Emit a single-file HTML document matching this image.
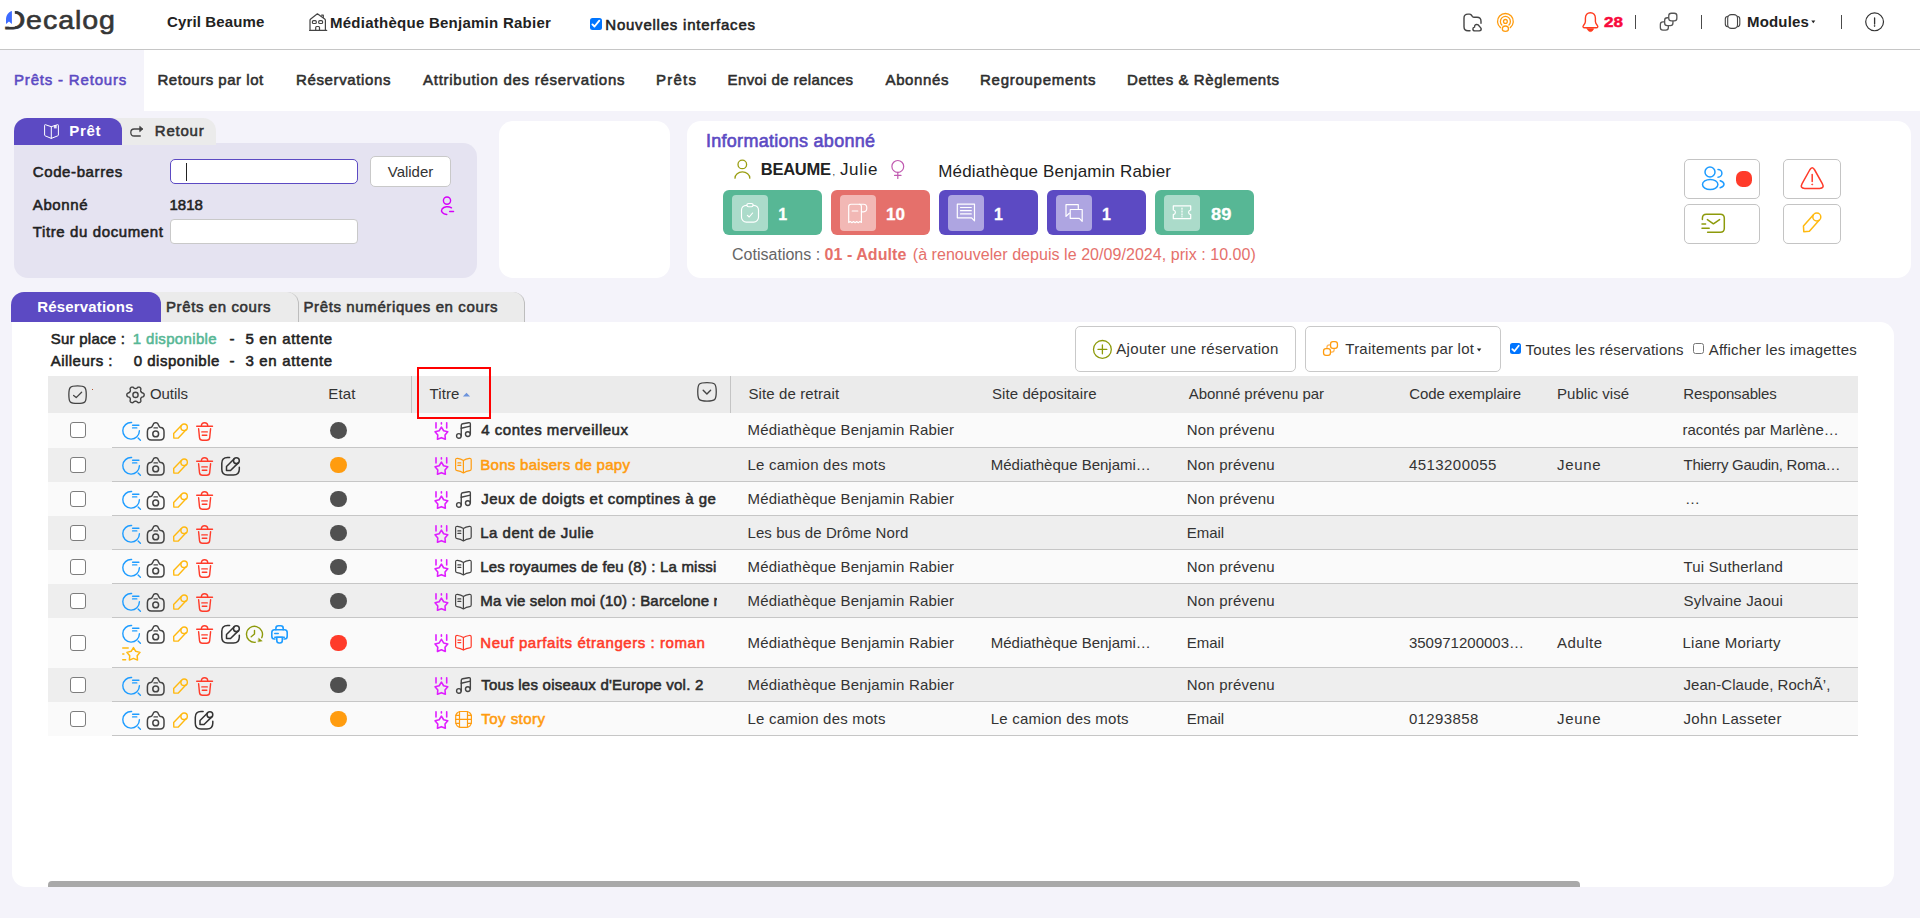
<!DOCTYPE html>
<html lang="fr">
<head>
<meta charset="utf-8">
<title>Decalog - Prêts - Retours</title>
<style>
html,body{margin:0;padding:0;}
body{width:1920px;height:918px;overflow:hidden;background:#f4f3fa;font-family:"Liberation Sans",sans-serif;color:#333;position:relative;}
.a{position:absolute;box-sizing:border-box;}
.t{position:absolute;white-space:pre;line-height:1;font-weight:normal;}
.t.b{font-weight:bold;}
.t.m{-webkit-text-stroke:0.55px currentColor;}
svg{position:absolute;overflow:visible;}
.ic{fill:none;stroke:currentColor;stroke-width:1.5;stroke-linecap:round;stroke-linejoin:round;}
.btn{position:absolute;box-sizing:border-box;background:#fff;border:1px solid #c9c9c9;border-radius:5px;}
.cb{position:absolute;box-sizing:border-box;width:16px;height:16px;background:#fff;border:1px solid #7d7d7d;border-radius:3px;}
.dot{position:absolute;width:16.8px;height:16.8px;border-radius:50%;}
.row{position:absolute;left:48px;width:1810px;}
.ln{position:absolute;left:112px;width:1746px;height:1px;background:#c6c6c6;}
</style>
</head>
<body>
<div class="a" style="left:0;top:0;width:1920px;height:48px;background:#fff"></div>
<div class="a" style="left:0;top:48px;width:1920px;height:1px;background:#fff"></div>
<div class="a" style="left:0;top:49px;width:1920px;height:1px;background:#c6c6c6"></div>
<div class="a" style="left:0;top:50px;width:1920px;height:61px;background:#fff"></div>
<div class="a" style="left:0;top:50px;width:144px;height:61px;background:#f4f3fa"></div>
<div class="t" style="left:3.21px;top:7px;font-size:26px;color:#363636;letter-spacing:0.84px;transform:scaleX(1.1);transform-origin:0 0;-webkit-text-stroke:0.6px currentColor;"><span style="display:inline-block;width:20.99px;letter-spacing:0;transform:scaleX(1.0853);transform-origin:0 0;-webkit-text-stroke:0.75px currentColor;">D</span>ecalog</div>
<div class="t b" style="left:167.00px;top:14.00px;font-size:15px;color:#222;letter-spacing:0.133px;">Cyril Beaume</div>
<div class="t b" style="left:330.00px;top:15.00px;font-size:15px;color:#222;letter-spacing:0.255px;">Médiathèque Benjamin Rabier</div>
<div class="a" style="left:590px;top:18px;width:12px;height:12px;background:#0075ff;border-radius:2.5px"></div>
<div class="t m" style="left:605.30px;top:17.00px;font-size:15px;color:#222;letter-spacing:0.770px;">Nouvelles interfaces</div>
<div class="t b" style="left:1604.25px;top:14.00px;font-size:15px;color:#f80a3c;transform:scaleX(1.1351);transform-origin:0 0;-webkit-text-stroke:0.5px currentColor;">28</div>
<div class="a" style="left:1635px;top:15px;width:1px;height:14px;background:#4a4a4a"></div>
<div class="a" style="left:1701px;top:15px;width:1px;height:14px;background:#4a4a4a"></div>
<div class="a" style="left:1841px;top:15px;width:1px;height:14px;background:#4a4a4a"></div>
<div class="t b" style="left:1747.00px;top:14.00px;font-size:15px;color:#222;letter-spacing:0.168px;">Modules</div>
<div class="t m" style="left:14.00px;top:72.00px;font-size:15px;color:#5c4ac3;letter-spacing:0.813px;">Prêts - Retours</div>
<div class="t m" style="left:157.50px;top:72.00px;font-size:15px;color:#2e2e2e;letter-spacing:0.521px;">Retours par lot</div>
<div class="t m" style="left:296.00px;top:72.00px;font-size:15px;color:#2e2e2e;letter-spacing:0.633px;">Réservations</div>
<div class="t m" style="left:423.00px;top:72.00px;font-size:15px;color:#2e2e2e;letter-spacing:0.731px;">Attribution des réservations</div>
<div class="t m" style="left:656.00px;top:72.00px;font-size:15px;color:#2e2e2e;letter-spacing:1.248px;">Prêts</div>
<div class="t m" style="left:727.50px;top:72.00px;font-size:15px;color:#2e2e2e;letter-spacing:0.391px;">Envoi de relances</div>
<div class="t m" style="left:885.50px;top:72.00px;font-size:15px;color:#2e2e2e;letter-spacing:0.631px;">Abonnés</div>
<div class="t m" style="left:980.00px;top:72.00px;font-size:15px;color:#2e2e2e;letter-spacing:0.731px;">Regroupements</div>
<div class="t m" style="left:1127.00px;top:72.00px;font-size:15px;color:#2e2e2e;letter-spacing:0.571px;">Dettes &amp; Règlements</div>
<div class="a" style="left:14px;top:143px;width:463px;height:135.2px;background:#e5e3f1;border-radius:0 14px 14px 14px"></div>
<div class="a" style="left:108px;top:118px;width:108px;height:27px;background:#ebebeb;border-radius:0 13px 0 0"></div>
<div class="a" style="left:14px;top:118px;width:108px;height:27px;background:#5c4ac3;border-radius:13px 12px 0 0"></div>
<div class="t b" style="left:69.25px;top:123.00px;font-size:15px;color:#fff;letter-spacing:0.688px;">Prêt</div>
<div class="t m" style="left:154.75px;top:123.00px;font-size:15px;color:#333;letter-spacing:0.795px;">Retour</div>
<div class="t m" style="left:32.75px;top:164.00px;font-size:15px;color:#222;letter-spacing:0.613px;">Code-barres</div>
<div class="a" style="left:170px;top:159px;width:188px;height:25px;background:#fff;border:1.5px solid #5c4ac3;border-radius:5px"></div>
<div class="a" style="left:186px;top:163px;width:1px;height:18px;background:#222"></div>
<div class="btn" style="left:370px;top:156px;width:81px;height:31px"></div>
<div class="t" style="left:387.75px;top:164.00px;font-size:15px;color:#333;letter-spacing:-0.014px;">Valider</div>
<div class="t m" style="left:32.75px;top:197.00px;font-size:15px;color:#222;letter-spacing:0.625px;">Abonné</div>
<div class="t m" style="left:169.50px;top:197.00px;font-size:15px;color:#222;letter-spacing:-0.009px;">1818</div>
<div class="t m" style="left:32.75px;top:224.00px;font-size:15px;color:#222;letter-spacing:0.614px;">Titre du document</div>
<div class="a" style="left:170px;top:219px;width:188px;height:25px;background:#fff;border:1px solid #c9c9c9;border-radius:4px"></div>
<div class="a" style="left:498.5px;top:120.6px;width:171.8px;height:157.6px;background:#fff;border-radius:14px"></div>
<div class="a" style="left:686.6px;top:120.6px;width:1224.5px;height:157.6px;background:#fff;border-radius:14px"></div>
<div class="t" style="left:706.00px;top:132.00px;font-size:18px;color:#5c4ac3;letter-spacing:0.272px;-webkit-text-stroke:0.6px currentColor;">Informations abonné</div>
<div class="t b" style="left:760.80px;top:161.00px;font-size:16.5px;color:#222;letter-spacing:-0.259px;">BEAUME</div>
<div class="t" style="left:832.60px;top:168.00px;font-size:9px;color:#222;">,</div>
<div class="t" style="left:840.00px;top:161.00px;font-size:17px;color:#222;letter-spacing:0.623px;">Julie</div>
<div class="t" style="left:938.25px;top:163.00px;font-size:17px;color:#222;letter-spacing:0.153px;">Médiathèque Benjamin Rabier</div>
<div class="a" style="left:722.5px;top:190px;width:99px;height:44.5px;background:#57b795;border-radius:6px"></div>
<div class="a" style="left:731.5px;top:195px;width:36px;height:35.5px;background:#abdbca;border-radius:4px"></div>
<div class="t b" style="left:778.25px;top:207.00px;font-size:16px;color:#fff;-webkit-text-stroke:0.3px currentColor;">1</div>
<div class="a" style="left:830.5px;top:190px;width:99px;height:44.5px;background:#e5706b;border-radius:6px"></div>
<div class="a" style="left:839.5px;top:195px;width:36px;height:35.5px;background:#f2b8b5;border-radius:4px"></div>
<div class="t b" style="left:885.93px;top:207.00px;font-size:16px;color:#fff;transform:scaleX(1.0652);transform-origin:0 0;-webkit-text-stroke:0.3px currentColor;">10</div>
<div class="a" style="left:938.5px;top:190px;width:99px;height:44.5px;background:#5c4ac3;border-radius:6px"></div>
<div class="a" style="left:947.5px;top:195px;width:36px;height:35.5px;background:#aea5e1;border-radius:4px"></div>
<div class="t b" style="left:994.00px;top:207.00px;font-size:16px;color:#fff;-webkit-text-stroke:0.3px currentColor;">1</div>
<div class="a" style="left:1046.5px;top:190px;width:99px;height:44.5px;background:#5c4ac3;border-radius:6px"></div>
<div class="a" style="left:1055.5px;top:195px;width:36px;height:35.5px;background:#aea5e1;border-radius:4px"></div>
<div class="t b" style="left:1102.00px;top:207.00px;font-size:16px;color:#fff;-webkit-text-stroke:0.3px currentColor;">1</div>
<div class="a" style="left:1154.5px;top:190px;width:99px;height:44.5px;background:#57b795;border-radius:6px"></div>
<div class="a" style="left:1163.5px;top:195px;width:36px;height:35.5px;background:#abdbca;border-radius:4px"></div>
<div class="t b" style="left:1211.30px;top:207.00px;font-size:16px;color:#fff;transform:scaleX(1.1398);transform-origin:0 0;-webkit-text-stroke:0.3px currentColor;">89</div>
<div class="t" style="left:732.00px;top:247.00px;font-size:16px;color:#666;letter-spacing:0.013px;">Cotisations :</div>
<div class="t b" style="left:824.50px;top:247.00px;font-size:16px;color:#e5706b;letter-spacing:0.061px;">01 - Adulte</div>
<div class="t" style="left:912.75px;top:247.00px;font-size:16px;color:#e5706b;letter-spacing:0.050px;">(à renouveler depuis le 20/09/2024, prix : 10.00)</div>
<div class="btn" style="left:1684px;top:159px;width:76px;height:40px;border-color:#c4c4c4"></div>
<div class="btn" style="left:1783px;top:159px;width:58px;height:40px;border-color:#c4c4c4"></div>
<div class="btn" style="left:1684px;top:204px;width:76px;height:40px;border-color:#c4c4c4"></div>
<div class="btn" style="left:1783px;top:204px;width:58px;height:40px;border-color:#c4c4c4"></div>
<div class="a" style="left:1736px;top:171px;width:16px;height:16px;background:#ff3b2a;border-radius:6.5px"></div>
<div class="a" style="left:11.7px;top:321.7px;width:1882.2px;height:565.5px;background:#fff;border-radius:0 14px 14px 14px"></div>
<div class="a" style="left:290px;top:292px;width:235px;height:30px;background:#ebebeb;border-radius:0 12px 0 0;border-right:1px solid #bdbdbd"></div>
<div class="a" style="left:150px;top:292px;width:149px;height:30px;background:#ebebeb;border-radius:0 12px 0 0;border-right:1px solid #bdbdbd"></div>
<div class="a" style="left:11px;top:292px;width:150px;height:30px;background:#5c4ac3;border-radius:13px 12px 0 0"></div>
<div class="t b" style="left:37.25px;top:299.00px;font-size:15px;color:#fff;letter-spacing:0.171px;">Réservations</div>
<div class="t m" style="left:166.00px;top:299.00px;font-size:15px;color:#333;letter-spacing:0.599px;">Prêts en cours</div>
<div class="t m" style="left:303.50px;top:299.00px;font-size:15px;color:#333;letter-spacing:0.614px;">Prêts numériques en cours</div>
<div class="t m" style="left:50.75px;top:331.00px;font-size:15px;color:#222;letter-spacing:0.246px;">Sur place :</div>
<div class="t m" style="left:132.75px;top:331.00px;font-size:15px;color:#57b795;letter-spacing:0.344px;">1 disponible</div>
<div class="t m" style="left:229.50px;top:331.00px;font-size:15px;color:#222;">-</div>
<div class="t m" style="left:245.50px;top:331.00px;font-size:15px;color:#222;letter-spacing:0.669px;">5 en attente</div>
<div class="t m" style="left:50.75px;top:353.00px;font-size:15px;color:#222;letter-spacing:0.461px;">Ailleurs :</div>
<div class="t m" style="left:133.75px;top:353.00px;font-size:15px;color:#222;letter-spacing:0.503px;">0 disponible</div>
<div class="t m" style="left:229.50px;top:353.00px;font-size:15px;color:#222;">-</div>
<div class="t m" style="left:245.50px;top:353.00px;font-size:15px;color:#222;letter-spacing:0.669px;">3 en attente</div>
<div class="btn" style="left:1075px;top:326px;width:221px;height:45.5px"></div>
<div class="t" style="left:1116.25px;top:341.00px;font-size:15px;color:#333;letter-spacing:0.318px;">Ajouter une réservation</div>
<div class="btn" style="left:1305px;top:326px;width:196px;height:45.5px"></div>
<div class="t" style="left:1345.30px;top:341.00px;font-size:15px;color:#333;letter-spacing:0.227px;">Traitements par lot</div>
<div class="a" style="left:1510px;top:343px;width:11px;height:11px;background:#0075ff;border-radius:2.5px"></div>
<div class="t" style="left:1525.50px;top:342.00px;font-size:15px;color:#333;letter-spacing:0.209px;">Toutes les réservations</div>
<div class="a" style="left:1693px;top:343px;width:11px;height:11px;background:#fff;border:1px solid #767676;border-radius:2.5px"></div>
<div class="t" style="left:1708.75px;top:342.00px;font-size:15px;color:#333;letter-spacing:0.232px;">Afficher les imagettes</div>
<div class="row" style="top:376px;height:37px;background:#ebebeb"></div>
<div class="a" style="left:411px;top:376px;width:1px;height:37px;background:#c4c4c4"></div>
<div class="a" style="left:730px;top:376px;width:1px;height:37px;background:#c4c4c4"></div>
<div class="t" style="left:150.00px;top:386.00px;font-size:15px;color:#333;letter-spacing:-0.068px;">Outils</div>
<div class="t" style="left:328.25px;top:386.00px;font-size:15px;color:#333;letter-spacing:0.162px;">Etat</div>
<div class="t" style="left:429.50px;top:386.00px;font-size:15px;color:#333;letter-spacing:0.100px;">Titre</div>
<div class="t" style="left:748.50px;top:386.00px;font-size:15px;color:#333;letter-spacing:0.104px;">Site de retrait</div>
<div class="t" style="left:992.00px;top:386.00px;font-size:15px;color:#333;letter-spacing:0.080px;">Site dépositaire</div>
<div class="t" style="left:1188.75px;top:386.00px;font-size:15px;color:#333;letter-spacing:-0.041px;">Abonné prévenu par</div>
<div class="t" style="left:1409.30px;top:386.00px;font-size:15px;color:#333;letter-spacing:-0.118px;">Code exemplaire</div>
<div class="t" style="left:1557.00px;top:386.00px;font-size:15px;color:#333;letter-spacing:0.040px;">Public visé</div>
<div class="t" style="left:1683.25px;top:386.00px;font-size:15px;color:#333;letter-spacing:-0.142px;">Responsables</div>
<div class="row" style="top:413px;height:35px;background:#fafafa"></div>
<div class="ln" style="top:447px"></div>
<div class="cb" style="left:69.7px;top:422.0px"></div>
<div class="dot" style="left:330.2px;top:422.0px;background:#505050"></div>
<div class="t m" style="left:481.25px;top:422.00px;font-size:15px;color:#2b2b2b;letter-spacing:0.527px;">4 contes merveilleux</div>
<div class="t" style="left:747.50px;top:422.00px;font-size:15px;color:#333;letter-spacing:0.181px;">Médiathèque Benjamin Rabier</div>
<div class="t" style="left:1186.75px;top:422.00px;font-size:15px;color:#333;letter-spacing:0.195px;">Non prévenu</div>
<div class="t" style="left:1682.50px;top:422.00px;font-size:15px;color:#333;letter-spacing:-0.024px;">racontés par Marlène…</div>
<div class="row" style="top:448px;height:34px;background:#eeeeee"></div>
<div class="ln" style="top:481px"></div>
<div class="cb" style="left:69.7px;top:456.5px"></div>
<div class="dot" style="left:330.2px;top:456.5px;background:#ff9c0f"></div>
<div class="t m" style="left:480.25px;top:457.00px;font-size:15px;color:#ff9c0f;letter-spacing:0.289px;">Bons baisers de papy</div>
<div class="t" style="left:747.50px;top:457.00px;font-size:15px;color:#333;letter-spacing:0.222px;">Le camion des mots</div>
<div class="t" style="left:990.75px;top:457.00px;font-size:15px;color:#333;">Médiathèque Benjami…</div>
<div class="t" style="left:1186.75px;top:457.00px;font-size:15px;color:#333;letter-spacing:0.195px;">Non prévenu</div>
<div class="t" style="left:1408.90px;top:457.00px;font-size:15px;color:#333;letter-spacing:0.447px;">4513200055</div>
<div class="t" style="left:1557.00px;top:457.00px;font-size:15px;color:#333;letter-spacing:0.681px;">Jeune</div>
<div class="t" style="left:1683.50px;top:457.00px;font-size:15px;color:#333;letter-spacing:-0.278px;">Thierry Gaudin, Roma…</div>
<div class="row" style="top:482px;height:34px;background:#fafafa"></div>
<div class="ln" style="top:515px"></div>
<div class="cb" style="left:69.7px;top:490.5px"></div>
<div class="dot" style="left:330.2px;top:490.5px;background:#505050"></div>
<div class="t m" style="left:481.25px;top:491.00px;font-size:15px;color:#2b2b2b;letter-spacing:0.493px;width:235.25px;overflow:hidden;padding-bottom:5px;">Jeux de doigts et comptines à ge</div>
<div class="t" style="left:747.50px;top:491.00px;font-size:15px;color:#333;letter-spacing:0.181px;">Médiathèque Benjamin Rabier</div>
<div class="t" style="left:1186.75px;top:491.00px;font-size:15px;color:#333;letter-spacing:0.195px;">Non prévenu</div>
<div class="t" style="left:1685.00px;top:491.00px;font-size:15px;color:#333;">…</div>
<div class="row" style="top:516px;height:34px;background:#eeeeee"></div>
<div class="ln" style="top:549px"></div>
<div class="cb" style="left:69.7px;top:524.5px"></div>
<div class="dot" style="left:330.2px;top:524.5px;background:#505050"></div>
<div class="t m" style="left:480.25px;top:525.00px;font-size:15px;color:#2b2b2b;letter-spacing:0.495px;">La dent de Julie</div>
<div class="t" style="left:747.50px;top:525.00px;font-size:15px;color:#333;letter-spacing:0.080px;">Les bus de Drôme Nord</div>
<div class="t" style="left:1186.75px;top:525.00px;font-size:15px;color:#333;letter-spacing:-0.044px;">Email</div>
<div class="row" style="top:550px;height:34px;background:#fafafa"></div>
<div class="ln" style="top:583px"></div>
<div class="cb" style="left:69.7px;top:558.5px"></div>
<div class="dot" style="left:330.2px;top:558.5px;background:#505050"></div>
<div class="t m" style="left:480.25px;top:559.00px;font-size:15px;color:#2b2b2b;letter-spacing:0.181px;width:236.25px;overflow:hidden;padding-bottom:5px;">Les royaumes de feu (8) : La missi</div>
<div class="t" style="left:747.50px;top:559.00px;font-size:15px;color:#333;letter-spacing:0.181px;">Médiathèque Benjamin Rabier</div>
<div class="t" style="left:1186.75px;top:559.00px;font-size:15px;color:#333;letter-spacing:0.195px;">Non prévenu</div>
<div class="t" style="left:1683.50px;top:559.00px;font-size:15px;color:#333;letter-spacing:0.180px;">Tui Sutherland</div>
<div class="row" style="top:584px;height:34px;background:#eeeeee"></div>
<div class="ln" style="top:617px"></div>
<div class="cb" style="left:69.7px;top:592.5px"></div>
<div class="dot" style="left:330.2px;top:592.5px;background:#505050"></div>
<div class="t m" style="left:480.25px;top:593.00px;font-size:15px;color:#2b2b2b;letter-spacing:0.169px;width:236.25px;overflow:hidden;padding-bottom:5px;">Ma vie selon moi (10) : Barcelone n</div>
<div class="t" style="left:747.50px;top:593.00px;font-size:15px;color:#333;letter-spacing:0.181px;">Médiathèque Benjamin Rabier</div>
<div class="t" style="left:1186.75px;top:593.00px;font-size:15px;color:#333;letter-spacing:0.195px;">Non prévenu</div>
<div class="t" style="left:1683.50px;top:593.00px;font-size:15px;color:#333;letter-spacing:0.201px;">Sylvaine Jaoui</div>
<div class="row" style="top:618px;height:50px;background:#fafafa"></div>
<div class="ln" style="top:667px"></div>
<div class="cb" style="left:69.7px;top:634.5px"></div>
<div class="dot" style="left:330.2px;top:634.5px;background:#ff3b2a"></div>
<div class="t m" style="left:480.25px;top:635.00px;font-size:15px;color:#ff3b2a;letter-spacing:0.566px;">Neuf parfaits étrangers : roman</div>
<div class="t" style="left:747.50px;top:635.00px;font-size:15px;color:#333;letter-spacing:0.181px;">Médiathèque Benjamin Rabier</div>
<div class="t" style="left:990.75px;top:635.00px;font-size:15px;color:#333;">Médiathèque Benjami…</div>
<div class="t" style="left:1186.75px;top:635.00px;font-size:15px;color:#333;letter-spacing:-0.044px;">Email</div>
<div class="t" style="left:1408.90px;top:635.00px;font-size:15px;color:#333;">350971200003…</div>
<div class="t" style="left:1557.00px;top:635.00px;font-size:15px;color:#333;letter-spacing:0.512px;">Adulte</div>
<div class="t" style="left:1682.50px;top:635.00px;font-size:15px;color:#333;letter-spacing:0.228px;">Liane Moriarty</div>
<div class="row" style="top:668px;height:34px;background:#eeeeee"></div>
<div class="ln" style="top:701px"></div>
<div class="cb" style="left:69.7px;top:676.5px"></div>
<div class="dot" style="left:330.2px;top:676.5px;background:#505050"></div>
<div class="t m" style="left:481.25px;top:677.00px;font-size:15px;color:#2b2b2b;letter-spacing:0.240px;">Tous les oiseaux d'Europe vol. 2</div>
<div class="t" style="left:747.50px;top:677.00px;font-size:15px;color:#333;letter-spacing:0.181px;">Médiathèque Benjamin Rabier</div>
<div class="t" style="left:1186.75px;top:677.00px;font-size:15px;color:#333;letter-spacing:0.195px;">Non prévenu</div>
<div class="t" style="left:1683.50px;top:677.00px;font-size:15px;color:#333;letter-spacing:0.053px;">Jean-Claude, RochÃ’,</div>
<div class="row" style="top:702px;height:34px;background:#fafafa"></div>
<div class="ln" style="top:735px"></div>
<div class="cb" style="left:69.7px;top:710.5px"></div>
<div class="dot" style="left:330.2px;top:710.5px;background:#ff9c0f"></div>
<div class="t m" style="left:481.25px;top:711.00px;font-size:15px;color:#ff9c0f;letter-spacing:0.467px;">Toy story</div>
<div class="t" style="left:747.50px;top:711.00px;font-size:15px;color:#333;letter-spacing:0.222px;">Le camion des mots</div>
<div class="t" style="left:990.75px;top:711.00px;font-size:15px;color:#333;letter-spacing:0.207px;">Le camion des mots</div>
<div class="t" style="left:1186.75px;top:711.00px;font-size:15px;color:#333;letter-spacing:-0.044px;">Email</div>
<div class="t" style="left:1408.90px;top:711.00px;font-size:15px;color:#333;letter-spacing:0.386px;">01293858</div>
<div class="t" style="left:1557.00px;top:711.00px;font-size:15px;color:#333;letter-spacing:0.681px;">Jeune</div>
<div class="t" style="left:1683.50px;top:711.00px;font-size:15px;color:#333;letter-spacing:0.314px;">John Lasseter</div>
<div class="a" style="left:48px;top:881px;width:1532px;height:6.2px;background:#a9a9a9;border-radius:4px 4px 0 0"></div>
<svg width="1920" height="918" viewBox="0 0 1920 918" style="left:0;top:0"><rect x="3" y="8" width="11.8" height="18.6" fill="#fff"/>
<path d="M11.9 11.1 C8 12.3 6 15.5 6 20 V24 L9 21.6 L11.9 24 Z" fill="#3d6bff"/>
<path d="M310 30.4 V20.3 Q310 19.5 310.7 18.95 L317.4 13.8 L324.7 19.1 Q325.4 19.6 325.4 20.5 V30.4 M309.6 30.4 H326.7" fill="none" stroke="#444" stroke-width="1.2" stroke-linecap="round" stroke-linejoin="round" />
<rect x="312.40" y="20.60" width="3.9" height="2.9" rx="1.1" fill="none" stroke="#444" stroke-width="1.2"/>
<rect x="318.70" y="20.60" width="3.9" height="2.9" rx="1.1" fill="none" stroke="#444" stroke-width="1.2"/>
<path d="M315.7 30.4 V27.5 Q315.7 26.5 316.7 26.5 H318.5 Q319.5 26.5 319.5 27.5 V30.4" fill="none" stroke="#444" stroke-width="1.2" stroke-linecap="round" stroke-linejoin="round" />
<path d="M321.6 15.2 H323.3 V17.4" fill="none" stroke="#444" stroke-width="1.2" stroke-linecap="round" stroke-linejoin="round" />
<path d="M592.4 24.4 L594.5 26.5 L599.3 20.7" fill="none" stroke="#fff" stroke-width="1.9" stroke-linecap="round" stroke-linejoin="round" />
<path d="M1512.3 349.1 L1514.4 351.2 L1518.7 345.8" fill="none" stroke="#fff" stroke-width="1.8" stroke-linecap="round" stroke-linejoin="round" />
<path d="M1470 30.8 H1468 Q1464 30.8 1464 26.8 V18 Q1464 14.1 1468 14.1 H1469.4 Q1470.6 14.1 1471.3 15 L1472.3 16.4 Q1473 17.3 1474.2 17.3 H1477 Q1481 17.3 1481 21.3 V23.2" fill="none" stroke="#444" stroke-width="1.4" stroke-linecap="round" stroke-linejoin="round" />
<path d="M1475 30.9 Q1472.9 30.9 1472.9 29 Q1472.9 27.3 1474.6 27.1 Q1474.4 24.5 1476.8 24.5 Q1478.4 24.5 1479.1 25.9 Q1481.2 28 1481.2 29.1 Q1481.2 30.9 1479.2 30.9 Z" fill="none" stroke="#444" stroke-width="1.4" stroke-linecap="round" stroke-linejoin="round" />
<path d="M1500.53 27.63 A7.9 7.9 0 1 1 1510.27 27.63" fill="none" stroke="#ff9c0f" stroke-width="1.3" stroke-linecap="round" stroke-linejoin="round" />
<path d="M1501.86 24.94 A5 5 0 1 1 1508.94 24.94" fill="none" stroke="#ff9c0f" stroke-width="1.3" stroke-linecap="round" stroke-linejoin="round" />
<circle cx="1505.40" cy="21.40" r="1.9" fill="none" stroke="#ff9c0f" stroke-width="1.3"/>
<path d="M1505.4 26 C1507.4 26 1508.5 27.6 1508.5 29 C1508.5 30.6 1507.2 31.3 1505.4 31.3 C1503.6 31.3 1502.3 30.6 1502.3 29 C1502.3 27.6 1503.4 26 1505.4 26 Z" fill="none" stroke="#ff9c0f" stroke-width="1.3" stroke-linecap="round" stroke-linejoin="round" />
<path d="M1590.4 12.7 C1587.3 12.7 1585.4 15.2 1585.4 18.2 V21.5 C1585.4 23.2 1584.5 24.2 1583.5 25.4 C1582.5 26.6 1583 27.8 1584.6 27.8 H1596.2 C1597.8 27.8 1598.3 26.6 1597.3 25.4 C1596.3 24.2 1595.4 23.2 1595.4 21.5 V18.2 C1595.4 15.2 1593.5 12.7 1590.4 12.7 Z" fill="none" stroke="#ff3b1f" stroke-width="1.4" stroke-linecap="round" stroke-linejoin="round" />
<path d="M1587.2 28.8 H1593.6 Q1592.6 31.6 1590.4 31.6 Q1588.2 31.6 1587.2 28.8 Z" fill="#ff3b1f" stroke="#ff3b1f" stroke-width="0.8" stroke-linecap="round" stroke-linejoin="round" />
<rect x="1660.35" y="21.95" width="8.0" height="8.1" rx="2.6" fill="#fff" stroke="#555" stroke-width="1.3"/>
<rect x="1664.65" y="17.75" width="8.3" height="7.9" rx="2.6" fill="#fff" stroke="#555" stroke-width="1.3"/>
<rect x="1668.75" y="13.25" width="8.1" height="7.7" rx="2.6" fill="#fff" stroke="#555" stroke-width="1.3"/>
<rect x="1727.70" y="14.60" width="9.8" height="13.8" rx="3.6" fill="none" stroke="#444" stroke-width="1.1"/>
<path d="M1727.7 16.2 Q1725.3 16.6 1725.3 19 V24 Q1725.3 26.4 1727.7 26.8 M1737.5 16.2 Q1739.8 16.6 1739.8 19 V24 Q1739.8 26.4 1737.5 26.8" fill="none" stroke="#444" stroke-width="1.1" stroke-linecap="round" stroke-linejoin="round" />
<path d="M1811.3 20.6 H1815.3 L1813.3 23.2 Z" fill="#222"/>
<circle cx="1874.60" cy="21.85" r="8.9" fill="none" stroke="#333" stroke-width="1.2"/>
<path d="M1874.6 17.9 V24" fill="none" stroke="#333" stroke-width="1.3" stroke-linecap="round" stroke-linejoin="round" />
<circle cx="1874.60" cy="25.90" r="0.5" fill="#333" stroke="#333" stroke-width="0.8"/>
<path d="M51.3 126.7 L45.4 124.7 Q44.6 124.5 44.6 125.3 V135 Q44.6 135.6 45.2 135.85 L51.3 138.4 L57.7 135.85 Q58.4 135.6 58.4 135 V125.3 Q58.4 124.5 57.6 124.7 L51.3 126.7 V138.4" fill="none" stroke="#fff" stroke-width="1.0" stroke-linecap="round" stroke-linejoin="round" />
<rect x="53.9" y="125.1" width="2.8" height="3.3" fill="#fff" fill-opacity="0.85"/>
<path d="M142.3 129 H134.2 Q130.8 129 130.8 132.5 Q130.8 136 134.2 136 H140.3" fill="none" stroke="#444" stroke-width="1.3" stroke-linecap="round" stroke-linejoin="round" />
<path d="M140 126.6 L142.7 129 L140 131.4 Z" fill="#444" stroke="#444" stroke-width="0.9" stroke-linecap="round" stroke-linejoin="round" />
<circle cx="447.00" cy="200.60" r="3.6" fill="none" stroke="#d500f9" stroke-width="1.4"/>
<path d="M451.5 207.8 A5.9 3.9 0 1 0 446.8 214.5" fill="none" stroke="#d500f9" stroke-width="1.4" stroke-linecap="round" stroke-linejoin="round" />
<path d="M449.7 211.5 H453.5" fill="none" stroke="#d500f9" stroke-width="1.5" stroke-linecap="round" stroke-linejoin="round" />
<circle cx="742.30" cy="164.40" r="4.3" fill="none" stroke="#9a9e12" stroke-width="1.3"/>
<path d="M735 178.2 A7.4 6.3 0 0 1 749.8 178.2" fill="none" stroke="#9a9e12" stroke-width="1.3" stroke-linecap="round" stroke-linejoin="round" />
<circle cx="897.80" cy="166.40" r="5.9" fill="none" stroke="#c05ab0" stroke-width="1.2"/>
<path d="M897.8 172.4 V178.5 M894.6 175.4 H901" fill="none" stroke="#c05ab0" stroke-width="1.2" stroke-linecap="round" stroke-linejoin="round" />
<rect x="741.50" y="205.30" width="17" height="16.8" rx="4.8" fill="none" stroke="#fff" stroke-width="1.15"/>
<rect x="746.90" y="203.50" width="6.2" height="3.2" rx="1.6" fill="#abdbca" stroke="#fff" stroke-width="1.15"/>
<path d="M747.4 215.4 L749.2 217 L752.6 213" fill="none" stroke="#fff" stroke-width="1.15" stroke-linecap="round" stroke-linejoin="round" />
<path d="M861.4 222.4 V206.5 Q861.4 204.2 859.2 204.2 H851 Q848.7 204.2 848.7 206.5 V222.6 L850.3 221.5 L851.9 222.7 L853.5 221.5 L855.1 222.7 L856.7 221.5 L858.3 222.7 L859.9 221.5 L861.4 222.4" fill="none" stroke="#fff" stroke-width="1.15" stroke-linecap="round" stroke-linejoin="round" />
<path d="M859.2 204.2 H863.5 Q866.8 204.2 866.8 208 Q866.8 211.8 863.5 211.8 H861.4" fill="none" stroke="#fff" stroke-width="1.15" stroke-linecap="round" stroke-linejoin="round" />
<path d="M852.2 211 H857.8" fill="none" stroke="#fff" stroke-width="1.15" stroke-linecap="round" stroke-linejoin="round" />
<path d="M957.3 204.2 H974.5 V220.8 L971.6 217.8 H957.3 Z" fill="none" stroke="#fff" stroke-width="1.2" stroke-linecap="round" stroke-linejoin="round" />
<path d="M960.5 207.5 H971.3 M960.5 210.7 H971.3 M960.5 213.9 H971.3" fill="none" stroke="#fff" stroke-width="1.2" stroke-linecap="round" stroke-linejoin="round" />
<path d="M1078.3 208.8 V204.7 H1066 V216.4 L1069.3 213.2" fill="none" stroke="#fff" stroke-width="1.2" stroke-linecap="round" stroke-linejoin="round" />
<path d="M1070.2 209.5 H1082.2 V221.3 L1079.3 218.3 H1070.2 Z" fill="none" stroke="#fff" stroke-width="1.2" stroke-linecap="round" stroke-linejoin="round" />
<path d="M1173.3 205.9 H1190.7 V210 Q1188.6 210.4 1188.6 212.3 Q1188.6 214.2 1190.7 214.6 V218.7 H1173.3 V214.6 Q1175.4 214.2 1175.4 212.3 Q1175.4 210.4 1173.3 210 Z" fill="none" stroke="#fff" stroke-width="1.2" stroke-linecap="round" stroke-linejoin="round" />
<path d="M1182 208 V216.8" fill="none" stroke="#fff" stroke-width="1.2" stroke-linecap="round" stroke-linejoin="round" stroke-dasharray="1.2 1.7"/>
<circle cx="1710.00" cy="172.00" r="5" fill="none" stroke="#1e9cff" stroke-width="1.5"/>
<ellipse cx="1710.20" cy="184.50" rx="7.7" ry="5" fill="none" stroke="#1e9cff" stroke-width="1.5"/>
<path d="M1718 169.4 A3.9 3.9 0 0 1 1718 177.2" fill="none" stroke="#1e9cff" stroke-width="1.5" stroke-linecap="round" stroke-linejoin="round" />
<path d="M1720.2 180.7 Q1724 182 1724 184.2 Q1724 186.6 1720.2 187.7" fill="none" stroke="#1e9cff" stroke-width="1.5" stroke-linecap="round" stroke-linejoin="round" />
<path d="M1809.7 170 Q1812.2 165.7 1814.7 170 L1822.3 183.6 Q1824.8 188.4 1819.6 188.4 H1804.8 Q1799.6 188.4 1802.1 183.6 Z" fill="none" stroke="#ff3b2a" stroke-width="1.5" stroke-linecap="round" stroke-linejoin="round" />
<path d="M1812.2 174.6 V181.4" fill="none" stroke="#ff3b2a" stroke-width="1.5" stroke-linecap="round" stroke-linejoin="round" />
<circle cx="1812.20" cy="184.40" r="0.5" fill="#ff3b2a" stroke="#ff3b2a" stroke-width="0.9"/>
<path d="M1702.4 219.6 V218.2 Q1702.4 214.2 1706.4 214.2 H1720.3 Q1724.3 214.2 1724.3 218.2 V228.3 Q1724.3 232.3 1720.3 232.3 H1707.6" fill="none" stroke="#8d9a0b" stroke-width="1.5" stroke-linecap="round" stroke-linejoin="round" />
<path d="M1707.4 219.6 L1713.4 223.8 L1719.6 219.6" fill="none" stroke="#8d9a0b" stroke-width="1.5" stroke-linecap="round" stroke-linejoin="round" />
<path d="M1702 224 H1705.6 M1702 228.2 H1709.2" fill="none" stroke="#8d9a0b" stroke-width="1.5" stroke-linecap="round" stroke-linejoin="round" />
<path d="M1813.42 214.86 L1803.46 226.12 L1803.80 231.70 L1809.38 231.36 L1819.34 220.09" fill="none" stroke="#ffb910" stroke-width="1.5" stroke-linecap="round" stroke-linejoin="round" />
<circle cx="1816.80" cy="217.00" r="4.0" fill="none" stroke="#ffb910" stroke-width="1.5"/>
<circle cx="1102.40" cy="349.40" r="8.9" fill="none" stroke="#8d9a0b" stroke-width="1.3"/>
<path d="M1098 349.4 H1106.8 M1102.4 345 V353.8" fill="none" stroke="#8d9a0b" stroke-width="1.3" stroke-linecap="round" stroke-linejoin="round" />
<rect x="1326.95" y="344.85" width="7.2" height="7.2" rx="2.4" fill="#fff" stroke="#ffb75a" stroke-width="1.3"/>
<rect x="1323.55" y="348.55" width="6.9" height="6.9" rx="2.4" fill="#fff" stroke="#ff9c0f" stroke-width="1.3"/>
<rect x="1330.55" y="341.55" width="6.9" height="6.9" rx="2.4" fill="#fff" stroke="#ff9c0f" stroke-width="1.3"/>
<path d="M1476.9 348.6 H1481.3 L1479.1 351.4 Z" fill="#222"/>
<path d="M462.9 396.5 H470.1 L466.5 392.7 Z" fill="#6c93dc"/>
<path d="M77.55 385.95 C69.89 385.95 68.85 387.00 68.85 394.70 C68.85 402.40 69.89 403.45 77.55 403.45 C85.21 403.45 86.25 402.40 86.25 394.70 C86.25 387.00 85.21 385.95 77.55 385.95 Z" fill="none" stroke="#444" stroke-width="1.3" stroke-linecap="round" stroke-linejoin="round" />
<path d="M73.6 395.5 L76.2 397.6 L81.6 392.3" fill="none" stroke="#444" stroke-width="1.3" stroke-linecap="round" stroke-linejoin="round" />
<rect x="92" y="389" width="1" height="1" fill="#b0522d"/>
<path d="M144.20 394.90 L144.13 395.47 L143.90 396.01 L143.52 396.49 L142.74 396.84 L141.96 397.09 L141.53 397.40 L141.20 397.71 L140.96 398.05 L140.78 398.43 L140.68 398.87 L140.63 399.40 L140.80 400.20 L140.89 401.05 L140.66 401.62 L140.30 402.09 L139.85 402.43 L139.32 402.65 L138.74 402.73 L138.13 402.64 L137.44 402.14 L136.83 401.59 L136.35 401.37 L135.92 401.24 L135.50 401.20 L135.08 401.24 L134.65 401.37 L134.17 401.59 L133.56 402.14 L132.87 402.64 L132.26 402.73 L131.68 402.65 L131.15 402.43 L130.70 402.09 L130.34 401.62 L130.11 401.05 L130.20 400.20 L130.37 399.40 L130.32 398.87 L130.22 398.43 L130.04 398.05 L129.80 397.71 L129.47 397.40 L129.04 397.09 L128.26 396.84 L127.48 396.49 L127.10 396.01 L126.87 395.47 L126.80 394.90 L126.87 394.33 L127.10 393.79 L127.48 393.31 L128.26 392.96 L129.04 392.71 L129.47 392.40 L129.80 392.09 L130.04 391.75 L130.22 391.37 L130.32 390.93 L130.37 390.40 L130.20 389.60 L130.11 388.75 L130.34 388.18 L130.70 387.71 L131.15 387.37 L131.68 387.15 L132.26 387.07 L132.87 387.16 L133.56 387.66 L134.17 388.21 L134.65 388.43 L135.08 388.56 L135.50 388.60 L135.92 388.56 L136.35 388.43 L136.83 388.21 L137.44 387.66 L138.13 387.16 L138.74 387.07 L139.32 387.15 L139.85 387.37 L140.30 387.71 L140.66 388.18 L140.89 388.75 L140.80 389.60 L140.63 390.40 L140.68 390.93 L140.78 391.37 L140.96 391.75 L141.20 392.09 L141.53 392.40 L141.96 392.71 L142.74 392.96 L143.52 393.31 L143.90 393.79 L144.13 394.33 Z" fill="none" stroke="#444" stroke-width="1.4" stroke-linecap="round" stroke-linejoin="round" />
<circle cx="135.50" cy="394.90" r="2.6" fill="none" stroke="#444" stroke-width="1.4"/>
<path d="M707.00 382.55 C698.86 382.55 697.75 383.66 697.75 391.80 C697.75 399.94 698.86 401.05 707.00 401.05 C715.14 401.05 716.25 399.94 716.25 391.80 C716.25 383.66 715.14 382.55 707.00 382.55 Z" fill="none" stroke="#444" stroke-width="1.3" stroke-linecap="round" stroke-linejoin="round" />
<path d="M703.2 390.2 L706.9 393.9 L710.6 390.2" fill="none" stroke="#444" stroke-width="1.4" stroke-linecap="round" stroke-linejoin="round" />
<g transform="translate(122.00 422.00)">
<path d="M9.6 0.5 A8.3 8.3 0 1 0 17.4 8.8" fill="none" stroke="#1e9cff" stroke-width="1.4" stroke-linecap="round" stroke-linejoin="round" />
<path d="M16.1 16.1 L18.4 18.2" fill="none" stroke="#1e9cff" stroke-width="1.4" stroke-linecap="round" stroke-linejoin="round" />
<path d="M10.6 3.2 H16.9 M10.6 5.9 H14.8" fill="none" stroke="#1e9cff" stroke-width="1.4" stroke-linecap="round" stroke-linejoin="round" />
</g>
<g transform="translate(146.50 422.00)">
<path d="M4.4 5.4 C5.6 5.4 5.8 4.6 6.2 3.4 C6.8 1.6 7.4 0.7 8.6 0.7 H9.8 C11 0.7 11.6 1.6 12.2 3.4 C12.6 4.6 12.8 5.4 14 5.4 C16.5 5.4 17.5 7.2 17.5 9.8 V14 C17.5 16.8 16.3 18 13.5 18 H4.9 C2.1 18 0.9 16.8 0.9 14 V9.8 C0.9 7.2 1.9 5.4 4.4 5.4 Z" fill="none" stroke="#444" stroke-width="1.5" stroke-linecap="round" stroke-linejoin="round" />
<circle cx="9.20" cy="11.90" r="2.9" fill="none" stroke="#444" stroke-width="1.5"/>
<path d="M7.5 5.9 H10.9" fill="none" stroke="#444" stroke-width="1.4" stroke-linecap="round" stroke-linejoin="round" />
</g>
<g transform="translate(172.80 423.00)">
<path d="M8.58 2.41 L0.87 10.58 L1.00 15.10 L5.52 14.97 L13.24 6.81" fill="none" stroke="#ffb910" stroke-width="1.4" stroke-linecap="round" stroke-linejoin="round" />
<circle cx="11.30" cy="4.20" r="3.25" fill="none" stroke="#ffb910" stroke-width="1.4"/>
</g>
<g transform="translate(196.00 422.00)">
<path d="M0.7 4.3 H16.5" fill="none" stroke="#ff3b2a" stroke-width="1.4" stroke-linecap="round" stroke-linejoin="round" />
<path d="M5.4 4.3 V3.6 Q5.4 0.7 8.55 0.7 Q11.7 0.7 11.7 3.6 V4.3" fill="none" stroke="#ff3b2a" stroke-width="1.4" stroke-linecap="round" stroke-linejoin="round" />
<path d="M2.6 6.6 L3.5 15.6 Q3.8 18.3 6.5 18.3 H10.7 Q13.4 18.3 13.7 15.6 L14.6 6.6" fill="none" stroke="#ff3b2a" stroke-width="1.4" stroke-linecap="round" stroke-linejoin="round" />
<path d="M5.8 9.9 H11.3 M6.3 13.2 H10.8" fill="none" stroke="#ff3b2a" stroke-width="1.4" stroke-linecap="round" stroke-linejoin="round" />
</g>
<g transform="translate(434.00 421.75)">
<path d="M7.40 5.40 L9.63 9.03 L13.77 10.03 L11.01 13.27 L11.34 17.52 L7.40 15.90 L3.46 17.52 L3.79 13.27 L1.03 10.03 L5.17 9.03 Z" fill="none" stroke="#df1fff" stroke-width="1.6" stroke-linecap="round" stroke-linejoin="round" />
<path d="M2 1 V6.3 M7.4 1 V2.3 M12.7 1 V6.3" fill="none" stroke="#df1fff" stroke-width="1.6" stroke-linecap="round" stroke-linejoin="round" />
</g>
<g transform="translate(455.90 421.90)">
<circle cx="2.95" cy="14.00" r="2.3" fill="none" stroke="#444" stroke-width="1.4"/>
<circle cx="11.95" cy="12.20" r="2.4" fill="none" stroke="#444" stroke-width="1.4"/>
<path d="M5.35 14 V3.6 Q5.35 2.2 6.8 1.9 L12.6 0.8 Q14.45 0.5 14.45 2 V12.2" fill="none" stroke="#444" stroke-width="1.4" stroke-linecap="round" stroke-linejoin="round" />
<path d="M5.35 6.4 L14.45 4.2" fill="none" stroke="#444" stroke-width="1.4" stroke-linecap="round" stroke-linejoin="round" />
</g>
<g transform="translate(122.00 457.00)">
<path d="M9.6 0.5 A8.3 8.3 0 1 0 17.4 8.8" fill="none" stroke="#1e9cff" stroke-width="1.4" stroke-linecap="round" stroke-linejoin="round" />
<path d="M16.1 16.1 L18.4 18.2" fill="none" stroke="#1e9cff" stroke-width="1.4" stroke-linecap="round" stroke-linejoin="round" />
<path d="M10.6 3.2 H16.9 M10.6 5.9 H14.8" fill="none" stroke="#1e9cff" stroke-width="1.4" stroke-linecap="round" stroke-linejoin="round" />
</g>
<g transform="translate(146.50 457.00)">
<path d="M4.4 5.4 C5.6 5.4 5.8 4.6 6.2 3.4 C6.8 1.6 7.4 0.7 8.6 0.7 H9.8 C11 0.7 11.6 1.6 12.2 3.4 C12.6 4.6 12.8 5.4 14 5.4 C16.5 5.4 17.5 7.2 17.5 9.8 V14 C17.5 16.8 16.3 18 13.5 18 H4.9 C2.1 18 0.9 16.8 0.9 14 V9.8 C0.9 7.2 1.9 5.4 4.4 5.4 Z" fill="none" stroke="#444" stroke-width="1.5" stroke-linecap="round" stroke-linejoin="round" />
<circle cx="9.20" cy="11.90" r="2.9" fill="none" stroke="#444" stroke-width="1.5"/>
<path d="M7.5 5.9 H10.9" fill="none" stroke="#444" stroke-width="1.4" stroke-linecap="round" stroke-linejoin="round" />
</g>
<g transform="translate(172.80 458.00)">
<path d="M8.58 2.41 L0.87 10.58 L1.00 15.10 L5.52 14.97 L13.24 6.81" fill="none" stroke="#ffb910" stroke-width="1.4" stroke-linecap="round" stroke-linejoin="round" />
<circle cx="11.30" cy="4.20" r="3.25" fill="none" stroke="#ffb910" stroke-width="1.4"/>
</g>
<g transform="translate(196.00 457.00)">
<path d="M0.7 4.3 H16.5" fill="none" stroke="#ff3b2a" stroke-width="1.4" stroke-linecap="round" stroke-linejoin="round" />
<path d="M5.4 4.3 V3.6 Q5.4 0.7 8.55 0.7 Q11.7 0.7 11.7 3.6 V4.3" fill="none" stroke="#ff3b2a" stroke-width="1.4" stroke-linecap="round" stroke-linejoin="round" />
<path d="M2.6 6.6 L3.5 15.6 Q3.8 18.3 6.5 18.3 H10.7 Q13.4 18.3 13.7 15.6 L14.6 6.6" fill="none" stroke="#ff3b2a" stroke-width="1.4" stroke-linecap="round" stroke-linejoin="round" />
<path d="M5.8 9.9 H11.3 M6.3 13.2 H10.8" fill="none" stroke="#ff3b2a" stroke-width="1.4" stroke-linecap="round" stroke-linejoin="round" />
</g>
<g transform="translate(221.00 456.80)">
<path d="M8.6 0.75 H6.5 Q0.8 0.75 0.8 6.5 V12.5 Q0.8 18.2 6.5 18.2 H12.5 Q18.3 18.2 18.3 12.5 V10.4" fill="none" stroke="#333" stroke-width="1.5" stroke-linecap="round" stroke-linejoin="round" />
<path d="M13.01 2.25 L5.52 9.67 L5.50 13.70 L9.53 13.72 L17.02 6.30" fill="none" stroke="#333" stroke-width="1.5" stroke-linecap="round" stroke-linejoin="round" />
<circle cx="15.40" cy="3.90" r="2.9" fill="none" stroke="#333" stroke-width="1.5"/>
</g>
<g transform="translate(434.00 456.75)">
<path d="M7.40 5.40 L9.63 9.03 L13.77 10.03 L11.01 13.27 L11.34 17.52 L7.40 15.90 L3.46 17.52 L3.79 13.27 L1.03 10.03 L5.17 9.03 Z" fill="none" stroke="#df1fff" stroke-width="1.6" stroke-linecap="round" stroke-linejoin="round" />
<path d="M2 1 V6.3 M7.4 1 V2.3 M12.7 1 V6.3" fill="none" stroke="#df1fff" stroke-width="1.6" stroke-linecap="round" stroke-linejoin="round" />
</g>
<g transform="translate(454.90 457.50)">
<path d="M8.5 2.9 Q6 1.4 2.6 0.85 Q0.7 0.6 0.7 2.5 V11.6 Q0.7 13 2.2 13.2 Q5.6 13.7 8.5 15.4 Q11.4 13.7 14.8 13.2 Q16.3 13 16.3 11.6 V2.5 Q16.3 0.6 14.4 0.85 Q11 1.4 8.5 2.9 V15.4" fill="none" stroke="#ff9c0f" stroke-width="1.2" stroke-linecap="round" stroke-linejoin="round" />
<path d="M3 5.4 H5.9 M3 7.9 H5.9" fill="none" stroke="#ff9c0f" stroke-width="1.2" stroke-linecap="round" stroke-linejoin="round" />
</g>
<g transform="translate(122.00 491.00)">
<path d="M9.6 0.5 A8.3 8.3 0 1 0 17.4 8.8" fill="none" stroke="#1e9cff" stroke-width="1.4" stroke-linecap="round" stroke-linejoin="round" />
<path d="M16.1 16.1 L18.4 18.2" fill="none" stroke="#1e9cff" stroke-width="1.4" stroke-linecap="round" stroke-linejoin="round" />
<path d="M10.6 3.2 H16.9 M10.6 5.9 H14.8" fill="none" stroke="#1e9cff" stroke-width="1.4" stroke-linecap="round" stroke-linejoin="round" />
</g>
<g transform="translate(146.50 491.00)">
<path d="M4.4 5.4 C5.6 5.4 5.8 4.6 6.2 3.4 C6.8 1.6 7.4 0.7 8.6 0.7 H9.8 C11 0.7 11.6 1.6 12.2 3.4 C12.6 4.6 12.8 5.4 14 5.4 C16.5 5.4 17.5 7.2 17.5 9.8 V14 C17.5 16.8 16.3 18 13.5 18 H4.9 C2.1 18 0.9 16.8 0.9 14 V9.8 C0.9 7.2 1.9 5.4 4.4 5.4 Z" fill="none" stroke="#444" stroke-width="1.5" stroke-linecap="round" stroke-linejoin="round" />
<circle cx="9.20" cy="11.90" r="2.9" fill="none" stroke="#444" stroke-width="1.5"/>
<path d="M7.5 5.9 H10.9" fill="none" stroke="#444" stroke-width="1.4" stroke-linecap="round" stroke-linejoin="round" />
</g>
<g transform="translate(172.80 492.00)">
<path d="M8.58 2.41 L0.87 10.58 L1.00 15.10 L5.52 14.97 L13.24 6.81" fill="none" stroke="#ffb910" stroke-width="1.4" stroke-linecap="round" stroke-linejoin="round" />
<circle cx="11.30" cy="4.20" r="3.25" fill="none" stroke="#ffb910" stroke-width="1.4"/>
</g>
<g transform="translate(196.00 491.00)">
<path d="M0.7 4.3 H16.5" fill="none" stroke="#ff3b2a" stroke-width="1.4" stroke-linecap="round" stroke-linejoin="round" />
<path d="M5.4 4.3 V3.6 Q5.4 0.7 8.55 0.7 Q11.7 0.7 11.7 3.6 V4.3" fill="none" stroke="#ff3b2a" stroke-width="1.4" stroke-linecap="round" stroke-linejoin="round" />
<path d="M2.6 6.6 L3.5 15.6 Q3.8 18.3 6.5 18.3 H10.7 Q13.4 18.3 13.7 15.6 L14.6 6.6" fill="none" stroke="#ff3b2a" stroke-width="1.4" stroke-linecap="round" stroke-linejoin="round" />
<path d="M5.8 9.9 H11.3 M6.3 13.2 H10.8" fill="none" stroke="#ff3b2a" stroke-width="1.4" stroke-linecap="round" stroke-linejoin="round" />
</g>
<g transform="translate(434.00 490.75)">
<path d="M7.40 5.40 L9.63 9.03 L13.77 10.03 L11.01 13.27 L11.34 17.52 L7.40 15.90 L3.46 17.52 L3.79 13.27 L1.03 10.03 L5.17 9.03 Z" fill="none" stroke="#df1fff" stroke-width="1.6" stroke-linecap="round" stroke-linejoin="round" />
<path d="M2 1 V6.3 M7.4 1 V2.3 M12.7 1 V6.3" fill="none" stroke="#df1fff" stroke-width="1.6" stroke-linecap="round" stroke-linejoin="round" />
</g>
<g transform="translate(455.90 490.90)">
<circle cx="2.95" cy="14.00" r="2.3" fill="none" stroke="#444" stroke-width="1.4"/>
<circle cx="11.95" cy="12.20" r="2.4" fill="none" stroke="#444" stroke-width="1.4"/>
<path d="M5.35 14 V3.6 Q5.35 2.2 6.8 1.9 L12.6 0.8 Q14.45 0.5 14.45 2 V12.2" fill="none" stroke="#444" stroke-width="1.4" stroke-linecap="round" stroke-linejoin="round" />
<path d="M5.35 6.4 L14.45 4.2" fill="none" stroke="#444" stroke-width="1.4" stroke-linecap="round" stroke-linejoin="round" />
</g>
<g transform="translate(122.00 525.00)">
<path d="M9.6 0.5 A8.3 8.3 0 1 0 17.4 8.8" fill="none" stroke="#1e9cff" stroke-width="1.4" stroke-linecap="round" stroke-linejoin="round" />
<path d="M16.1 16.1 L18.4 18.2" fill="none" stroke="#1e9cff" stroke-width="1.4" stroke-linecap="round" stroke-linejoin="round" />
<path d="M10.6 3.2 H16.9 M10.6 5.9 H14.8" fill="none" stroke="#1e9cff" stroke-width="1.4" stroke-linecap="round" stroke-linejoin="round" />
</g>
<g transform="translate(146.50 525.00)">
<path d="M4.4 5.4 C5.6 5.4 5.8 4.6 6.2 3.4 C6.8 1.6 7.4 0.7 8.6 0.7 H9.8 C11 0.7 11.6 1.6 12.2 3.4 C12.6 4.6 12.8 5.4 14 5.4 C16.5 5.4 17.5 7.2 17.5 9.8 V14 C17.5 16.8 16.3 18 13.5 18 H4.9 C2.1 18 0.9 16.8 0.9 14 V9.8 C0.9 7.2 1.9 5.4 4.4 5.4 Z" fill="none" stroke="#444" stroke-width="1.5" stroke-linecap="round" stroke-linejoin="round" />
<circle cx="9.20" cy="11.90" r="2.9" fill="none" stroke="#444" stroke-width="1.5"/>
<path d="M7.5 5.9 H10.9" fill="none" stroke="#444" stroke-width="1.4" stroke-linecap="round" stroke-linejoin="round" />
</g>
<g transform="translate(172.80 526.00)">
<path d="M8.58 2.41 L0.87 10.58 L1.00 15.10 L5.52 14.97 L13.24 6.81" fill="none" stroke="#ffb910" stroke-width="1.4" stroke-linecap="round" stroke-linejoin="round" />
<circle cx="11.30" cy="4.20" r="3.25" fill="none" stroke="#ffb910" stroke-width="1.4"/>
</g>
<g transform="translate(196.00 525.00)">
<path d="M0.7 4.3 H16.5" fill="none" stroke="#ff3b2a" stroke-width="1.4" stroke-linecap="round" stroke-linejoin="round" />
<path d="M5.4 4.3 V3.6 Q5.4 0.7 8.55 0.7 Q11.7 0.7 11.7 3.6 V4.3" fill="none" stroke="#ff3b2a" stroke-width="1.4" stroke-linecap="round" stroke-linejoin="round" />
<path d="M2.6 6.6 L3.5 15.6 Q3.8 18.3 6.5 18.3 H10.7 Q13.4 18.3 13.7 15.6 L14.6 6.6" fill="none" stroke="#ff3b2a" stroke-width="1.4" stroke-linecap="round" stroke-linejoin="round" />
<path d="M5.8 9.9 H11.3 M6.3 13.2 H10.8" fill="none" stroke="#ff3b2a" stroke-width="1.4" stroke-linecap="round" stroke-linejoin="round" />
</g>
<g transform="translate(434.00 524.75)">
<path d="M7.40 5.40 L9.63 9.03 L13.77 10.03 L11.01 13.27 L11.34 17.52 L7.40 15.90 L3.46 17.52 L3.79 13.27 L1.03 10.03 L5.17 9.03 Z" fill="none" stroke="#df1fff" stroke-width="1.6" stroke-linecap="round" stroke-linejoin="round" />
<path d="M2 1 V6.3 M7.4 1 V2.3 M12.7 1 V6.3" fill="none" stroke="#df1fff" stroke-width="1.6" stroke-linecap="round" stroke-linejoin="round" />
</g>
<g transform="translate(454.90 525.50)">
<path d="M8.5 2.9 Q6 1.4 2.6 0.85 Q0.7 0.6 0.7 2.5 V11.6 Q0.7 13 2.2 13.2 Q5.6 13.7 8.5 15.4 Q11.4 13.7 14.8 13.2 Q16.3 13 16.3 11.6 V2.5 Q16.3 0.6 14.4 0.85 Q11 1.4 8.5 2.9 V15.4" fill="none" stroke="#444" stroke-width="1.2" stroke-linecap="round" stroke-linejoin="round" />
<path d="M3 5.4 H5.9 M3 7.9 H5.9" fill="none" stroke="#444" stroke-width="1.2" stroke-linecap="round" stroke-linejoin="round" />
</g>
<g transform="translate(122.00 559.00)">
<path d="M9.6 0.5 A8.3 8.3 0 1 0 17.4 8.8" fill="none" stroke="#1e9cff" stroke-width="1.4" stroke-linecap="round" stroke-linejoin="round" />
<path d="M16.1 16.1 L18.4 18.2" fill="none" stroke="#1e9cff" stroke-width="1.4" stroke-linecap="round" stroke-linejoin="round" />
<path d="M10.6 3.2 H16.9 M10.6 5.9 H14.8" fill="none" stroke="#1e9cff" stroke-width="1.4" stroke-linecap="round" stroke-linejoin="round" />
</g>
<g transform="translate(146.50 559.00)">
<path d="M4.4 5.4 C5.6 5.4 5.8 4.6 6.2 3.4 C6.8 1.6 7.4 0.7 8.6 0.7 H9.8 C11 0.7 11.6 1.6 12.2 3.4 C12.6 4.6 12.8 5.4 14 5.4 C16.5 5.4 17.5 7.2 17.5 9.8 V14 C17.5 16.8 16.3 18 13.5 18 H4.9 C2.1 18 0.9 16.8 0.9 14 V9.8 C0.9 7.2 1.9 5.4 4.4 5.4 Z" fill="none" stroke="#444" stroke-width="1.5" stroke-linecap="round" stroke-linejoin="round" />
<circle cx="9.20" cy="11.90" r="2.9" fill="none" stroke="#444" stroke-width="1.5"/>
<path d="M7.5 5.9 H10.9" fill="none" stroke="#444" stroke-width="1.4" stroke-linecap="round" stroke-linejoin="round" />
</g>
<g transform="translate(172.80 560.00)">
<path d="M8.58 2.41 L0.87 10.58 L1.00 15.10 L5.52 14.97 L13.24 6.81" fill="none" stroke="#ffb910" stroke-width="1.4" stroke-linecap="round" stroke-linejoin="round" />
<circle cx="11.30" cy="4.20" r="3.25" fill="none" stroke="#ffb910" stroke-width="1.4"/>
</g>
<g transform="translate(196.00 559.00)">
<path d="M0.7 4.3 H16.5" fill="none" stroke="#ff3b2a" stroke-width="1.4" stroke-linecap="round" stroke-linejoin="round" />
<path d="M5.4 4.3 V3.6 Q5.4 0.7 8.55 0.7 Q11.7 0.7 11.7 3.6 V4.3" fill="none" stroke="#ff3b2a" stroke-width="1.4" stroke-linecap="round" stroke-linejoin="round" />
<path d="M2.6 6.6 L3.5 15.6 Q3.8 18.3 6.5 18.3 H10.7 Q13.4 18.3 13.7 15.6 L14.6 6.6" fill="none" stroke="#ff3b2a" stroke-width="1.4" stroke-linecap="round" stroke-linejoin="round" />
<path d="M5.8 9.9 H11.3 M6.3 13.2 H10.8" fill="none" stroke="#ff3b2a" stroke-width="1.4" stroke-linecap="round" stroke-linejoin="round" />
</g>
<g transform="translate(434.00 558.75)">
<path d="M7.40 5.40 L9.63 9.03 L13.77 10.03 L11.01 13.27 L11.34 17.52 L7.40 15.90 L3.46 17.52 L3.79 13.27 L1.03 10.03 L5.17 9.03 Z" fill="none" stroke="#df1fff" stroke-width="1.6" stroke-linecap="round" stroke-linejoin="round" />
<path d="M2 1 V6.3 M7.4 1 V2.3 M12.7 1 V6.3" fill="none" stroke="#df1fff" stroke-width="1.6" stroke-linecap="round" stroke-linejoin="round" />
</g>
<g transform="translate(454.90 559.50)">
<path d="M8.5 2.9 Q6 1.4 2.6 0.85 Q0.7 0.6 0.7 2.5 V11.6 Q0.7 13 2.2 13.2 Q5.6 13.7 8.5 15.4 Q11.4 13.7 14.8 13.2 Q16.3 13 16.3 11.6 V2.5 Q16.3 0.6 14.4 0.85 Q11 1.4 8.5 2.9 V15.4" fill="none" stroke="#444" stroke-width="1.2" stroke-linecap="round" stroke-linejoin="round" />
<path d="M3 5.4 H5.9 M3 7.9 H5.9" fill="none" stroke="#444" stroke-width="1.2" stroke-linecap="round" stroke-linejoin="round" />
</g>
<g transform="translate(122.00 593.00)">
<path d="M9.6 0.5 A8.3 8.3 0 1 0 17.4 8.8" fill="none" stroke="#1e9cff" stroke-width="1.4" stroke-linecap="round" stroke-linejoin="round" />
<path d="M16.1 16.1 L18.4 18.2" fill="none" stroke="#1e9cff" stroke-width="1.4" stroke-linecap="round" stroke-linejoin="round" />
<path d="M10.6 3.2 H16.9 M10.6 5.9 H14.8" fill="none" stroke="#1e9cff" stroke-width="1.4" stroke-linecap="round" stroke-linejoin="round" />
</g>
<g transform="translate(146.50 593.00)">
<path d="M4.4 5.4 C5.6 5.4 5.8 4.6 6.2 3.4 C6.8 1.6 7.4 0.7 8.6 0.7 H9.8 C11 0.7 11.6 1.6 12.2 3.4 C12.6 4.6 12.8 5.4 14 5.4 C16.5 5.4 17.5 7.2 17.5 9.8 V14 C17.5 16.8 16.3 18 13.5 18 H4.9 C2.1 18 0.9 16.8 0.9 14 V9.8 C0.9 7.2 1.9 5.4 4.4 5.4 Z" fill="none" stroke="#444" stroke-width="1.5" stroke-linecap="round" stroke-linejoin="round" />
<circle cx="9.20" cy="11.90" r="2.9" fill="none" stroke="#444" stroke-width="1.5"/>
<path d="M7.5 5.9 H10.9" fill="none" stroke="#444" stroke-width="1.4" stroke-linecap="round" stroke-linejoin="round" />
</g>
<g transform="translate(172.80 594.00)">
<path d="M8.58 2.41 L0.87 10.58 L1.00 15.10 L5.52 14.97 L13.24 6.81" fill="none" stroke="#ffb910" stroke-width="1.4" stroke-linecap="round" stroke-linejoin="round" />
<circle cx="11.30" cy="4.20" r="3.25" fill="none" stroke="#ffb910" stroke-width="1.4"/>
</g>
<g transform="translate(196.00 593.00)">
<path d="M0.7 4.3 H16.5" fill="none" stroke="#ff3b2a" stroke-width="1.4" stroke-linecap="round" stroke-linejoin="round" />
<path d="M5.4 4.3 V3.6 Q5.4 0.7 8.55 0.7 Q11.7 0.7 11.7 3.6 V4.3" fill="none" stroke="#ff3b2a" stroke-width="1.4" stroke-linecap="round" stroke-linejoin="round" />
<path d="M2.6 6.6 L3.5 15.6 Q3.8 18.3 6.5 18.3 H10.7 Q13.4 18.3 13.7 15.6 L14.6 6.6" fill="none" stroke="#ff3b2a" stroke-width="1.4" stroke-linecap="round" stroke-linejoin="round" />
<path d="M5.8 9.9 H11.3 M6.3 13.2 H10.8" fill="none" stroke="#ff3b2a" stroke-width="1.4" stroke-linecap="round" stroke-linejoin="round" />
</g>
<g transform="translate(434.00 592.75)">
<path d="M7.40 5.40 L9.63 9.03 L13.77 10.03 L11.01 13.27 L11.34 17.52 L7.40 15.90 L3.46 17.52 L3.79 13.27 L1.03 10.03 L5.17 9.03 Z" fill="none" stroke="#df1fff" stroke-width="1.6" stroke-linecap="round" stroke-linejoin="round" />
<path d="M2 1 V6.3 M7.4 1 V2.3 M12.7 1 V6.3" fill="none" stroke="#df1fff" stroke-width="1.6" stroke-linecap="round" stroke-linejoin="round" />
</g>
<g transform="translate(454.90 593.50)">
<path d="M8.5 2.9 Q6 1.4 2.6 0.85 Q0.7 0.6 0.7 2.5 V11.6 Q0.7 13 2.2 13.2 Q5.6 13.7 8.5 15.4 Q11.4 13.7 14.8 13.2 Q16.3 13 16.3 11.6 V2.5 Q16.3 0.6 14.4 0.85 Q11 1.4 8.5 2.9 V15.4" fill="none" stroke="#444" stroke-width="1.2" stroke-linecap="round" stroke-linejoin="round" />
<path d="M3 5.4 H5.9 M3 7.9 H5.9" fill="none" stroke="#444" stroke-width="1.2" stroke-linecap="round" stroke-linejoin="round" />
</g>
<g transform="translate(122.00 625.00)">
<path d="M9.6 0.5 A8.3 8.3 0 1 0 17.4 8.8" fill="none" stroke="#1e9cff" stroke-width="1.4" stroke-linecap="round" stroke-linejoin="round" />
<path d="M16.1 16.1 L18.4 18.2" fill="none" stroke="#1e9cff" stroke-width="1.4" stroke-linecap="round" stroke-linejoin="round" />
<path d="M10.6 3.2 H16.9 M10.6 5.9 H14.8" fill="none" stroke="#1e9cff" stroke-width="1.4" stroke-linecap="round" stroke-linejoin="round" />
</g>
<g transform="translate(146.50 625.00)">
<path d="M4.4 5.4 C5.6 5.4 5.8 4.6 6.2 3.4 C6.8 1.6 7.4 0.7 8.6 0.7 H9.8 C11 0.7 11.6 1.6 12.2 3.4 C12.6 4.6 12.8 5.4 14 5.4 C16.5 5.4 17.5 7.2 17.5 9.8 V14 C17.5 16.8 16.3 18 13.5 18 H4.9 C2.1 18 0.9 16.8 0.9 14 V9.8 C0.9 7.2 1.9 5.4 4.4 5.4 Z" fill="none" stroke="#444" stroke-width="1.5" stroke-linecap="round" stroke-linejoin="round" />
<circle cx="9.20" cy="11.90" r="2.9" fill="none" stroke="#444" stroke-width="1.5"/>
<path d="M7.5 5.9 H10.9" fill="none" stroke="#444" stroke-width="1.4" stroke-linecap="round" stroke-linejoin="round" />
</g>
<g transform="translate(172.80 626.00)">
<path d="M8.58 2.41 L0.87 10.58 L1.00 15.10 L5.52 14.97 L13.24 6.81" fill="none" stroke="#ffb910" stroke-width="1.4" stroke-linecap="round" stroke-linejoin="round" />
<circle cx="11.30" cy="4.20" r="3.25" fill="none" stroke="#ffb910" stroke-width="1.4"/>
</g>
<g transform="translate(196.00 625.00)">
<path d="M0.7 4.3 H16.5" fill="none" stroke="#ff3b2a" stroke-width="1.4" stroke-linecap="round" stroke-linejoin="round" />
<path d="M5.4 4.3 V3.6 Q5.4 0.7 8.55 0.7 Q11.7 0.7 11.7 3.6 V4.3" fill="none" stroke="#ff3b2a" stroke-width="1.4" stroke-linecap="round" stroke-linejoin="round" />
<path d="M2.6 6.6 L3.5 15.6 Q3.8 18.3 6.5 18.3 H10.7 Q13.4 18.3 13.7 15.6 L14.6 6.6" fill="none" stroke="#ff3b2a" stroke-width="1.4" stroke-linecap="round" stroke-linejoin="round" />
<path d="M5.8 9.9 H11.3 M6.3 13.2 H10.8" fill="none" stroke="#ff3b2a" stroke-width="1.4" stroke-linecap="round" stroke-linejoin="round" />
</g>
<g transform="translate(221.00 624.80)">
<path d="M8.6 0.75 H6.5 Q0.8 0.75 0.8 6.5 V12.5 Q0.8 18.2 6.5 18.2 H12.5 Q18.3 18.2 18.3 12.5 V10.4" fill="none" stroke="#333" stroke-width="1.5" stroke-linecap="round" stroke-linejoin="round" />
<path d="M13.01 2.25 L5.52 9.67 L5.50 13.70 L9.53 13.72 L17.02 6.30" fill="none" stroke="#333" stroke-width="1.5" stroke-linecap="round" stroke-linejoin="round" />
<circle cx="15.40" cy="3.90" r="2.9" fill="none" stroke="#333" stroke-width="1.5"/>
</g>
<g transform="translate(245.00 625.00)">
<path d="M10.2 17.3 A8 8 0 1 1 16.75 12.7" fill="none" stroke="#8d9a0b" stroke-width="1.4" stroke-linecap="round" stroke-linejoin="round" />
<path d="M13.8 13.3 L17.3 16.1 L13.3 16.8 Z" fill="#8d9a0b" stroke="#8d9a0b" stroke-width="0.4" stroke-linecap="round" stroke-linejoin="round" />
<path d="M9.5 5.4 V9 L6.2 11.7" fill="none" stroke="#8d9a0b" stroke-width="1.4" stroke-linecap="round" stroke-linejoin="round" />
</g>
<g transform="translate(271.00 625.00)">
<path d="M4.9 4.7 V3.2 Q4.9 0.8 7.3 0.8 H9.8 Q12.2 0.8 12.2 3.2 V4.7" fill="none" stroke="#1e9cff" stroke-width="1.6" stroke-linecap="round" stroke-linejoin="round" />
<path d="M4 14 H3.5 Q0.8 14 0.8 11.3 V7.4 Q0.8 4.7 3.5 4.7 H13.5 Q16.2 4.7 16.2 7.4 V11.3 Q16.2 14 13.5 14 H13" fill="none" stroke="#1e9cff" stroke-width="1.6" stroke-linecap="round" stroke-linejoin="round" />
<path d="M5.8 12.3 H11.3 V15.6 Q11.3 18 8.9 18 H8.2 Q5.8 18 5.8 15.6 Z" fill="none" stroke="#1e9cff" stroke-width="1.6" stroke-linecap="round" stroke-linejoin="round" />
<path d="M3.8 12.3 H13.3 M3.8 8.5 H7.2" fill="none" stroke="#1e9cff" stroke-width="1.6" stroke-linecap="round" stroke-linejoin="round" />
</g>
<g transform="translate(122.00 646.80)">
<path d="M11.45 0.80 L13.74 4.54 L18.01 5.57 L15.16 8.91 L15.51 13.28 L11.45 11.60 L7.39 13.28 L7.74 8.91 L4.89 5.57 L9.16 4.54 Z" fill="none" stroke="#ffb910" stroke-width="1.5" stroke-linecap="round" stroke-linejoin="round" />
<path d="M0.75 1.2 H6.2 M0.75 7.2 H1.9 M0.75 13 H3.6" fill="none" stroke="#ffb910" stroke-width="1.5" stroke-linecap="round" stroke-linejoin="round" />
</g>
<g transform="translate(434.00 633.90)">
<path d="M7.40 5.40 L9.63 9.03 L13.77 10.03 L11.01 13.27 L11.34 17.52 L7.40 15.90 L3.46 17.52 L3.79 13.27 L1.03 10.03 L5.17 9.03 Z" fill="none" stroke="#df1fff" stroke-width="1.6" stroke-linecap="round" stroke-linejoin="round" />
<path d="M2 1 V6.3 M7.4 1 V2.3 M12.7 1 V6.3" fill="none" stroke="#df1fff" stroke-width="1.6" stroke-linecap="round" stroke-linejoin="round" />
</g>
<g transform="translate(454.90 634.65)">
<path d="M8.5 2.9 Q6 1.4 2.6 0.85 Q0.7 0.6 0.7 2.5 V11.6 Q0.7 13 2.2 13.2 Q5.6 13.7 8.5 15.4 Q11.4 13.7 14.8 13.2 Q16.3 13 16.3 11.6 V2.5 Q16.3 0.6 14.4 0.85 Q11 1.4 8.5 2.9 V15.4" fill="none" stroke="#ff3b2a" stroke-width="1.2" stroke-linecap="round" stroke-linejoin="round" />
<path d="M3 5.4 H5.9 M3 7.9 H5.9" fill="none" stroke="#ff3b2a" stroke-width="1.2" stroke-linecap="round" stroke-linejoin="round" />
</g>
<g transform="translate(122.00 677.00)">
<path d="M9.6 0.5 A8.3 8.3 0 1 0 17.4 8.8" fill="none" stroke="#1e9cff" stroke-width="1.4" stroke-linecap="round" stroke-linejoin="round" />
<path d="M16.1 16.1 L18.4 18.2" fill="none" stroke="#1e9cff" stroke-width="1.4" stroke-linecap="round" stroke-linejoin="round" />
<path d="M10.6 3.2 H16.9 M10.6 5.9 H14.8" fill="none" stroke="#1e9cff" stroke-width="1.4" stroke-linecap="round" stroke-linejoin="round" />
</g>
<g transform="translate(146.50 677.00)">
<path d="M4.4 5.4 C5.6 5.4 5.8 4.6 6.2 3.4 C6.8 1.6 7.4 0.7 8.6 0.7 H9.8 C11 0.7 11.6 1.6 12.2 3.4 C12.6 4.6 12.8 5.4 14 5.4 C16.5 5.4 17.5 7.2 17.5 9.8 V14 C17.5 16.8 16.3 18 13.5 18 H4.9 C2.1 18 0.9 16.8 0.9 14 V9.8 C0.9 7.2 1.9 5.4 4.4 5.4 Z" fill="none" stroke="#444" stroke-width="1.5" stroke-linecap="round" stroke-linejoin="round" />
<circle cx="9.20" cy="11.90" r="2.9" fill="none" stroke="#444" stroke-width="1.5"/>
<path d="M7.5 5.9 H10.9" fill="none" stroke="#444" stroke-width="1.4" stroke-linecap="round" stroke-linejoin="round" />
</g>
<g transform="translate(172.80 678.00)">
<path d="M8.58 2.41 L0.87 10.58 L1.00 15.10 L5.52 14.97 L13.24 6.81" fill="none" stroke="#ffb910" stroke-width="1.4" stroke-linecap="round" stroke-linejoin="round" />
<circle cx="11.30" cy="4.20" r="3.25" fill="none" stroke="#ffb910" stroke-width="1.4"/>
</g>
<g transform="translate(196.00 677.00)">
<path d="M0.7 4.3 H16.5" fill="none" stroke="#ff3b2a" stroke-width="1.4" stroke-linecap="round" stroke-linejoin="round" />
<path d="M5.4 4.3 V3.6 Q5.4 0.7 8.55 0.7 Q11.7 0.7 11.7 3.6 V4.3" fill="none" stroke="#ff3b2a" stroke-width="1.4" stroke-linecap="round" stroke-linejoin="round" />
<path d="M2.6 6.6 L3.5 15.6 Q3.8 18.3 6.5 18.3 H10.7 Q13.4 18.3 13.7 15.6 L14.6 6.6" fill="none" stroke="#ff3b2a" stroke-width="1.4" stroke-linecap="round" stroke-linejoin="round" />
<path d="M5.8 9.9 H11.3 M6.3 13.2 H10.8" fill="none" stroke="#ff3b2a" stroke-width="1.4" stroke-linecap="round" stroke-linejoin="round" />
</g>
<g transform="translate(434.00 676.75)">
<path d="M7.40 5.40 L9.63 9.03 L13.77 10.03 L11.01 13.27 L11.34 17.52 L7.40 15.90 L3.46 17.52 L3.79 13.27 L1.03 10.03 L5.17 9.03 Z" fill="none" stroke="#df1fff" stroke-width="1.6" stroke-linecap="round" stroke-linejoin="round" />
<path d="M2 1 V6.3 M7.4 1 V2.3 M12.7 1 V6.3" fill="none" stroke="#df1fff" stroke-width="1.6" stroke-linecap="round" stroke-linejoin="round" />
</g>
<g transform="translate(455.90 676.90)">
<circle cx="2.95" cy="14.00" r="2.3" fill="none" stroke="#444" stroke-width="1.4"/>
<circle cx="11.95" cy="12.20" r="2.4" fill="none" stroke="#444" stroke-width="1.4"/>
<path d="M5.35 14 V3.6 Q5.35 2.2 6.8 1.9 L12.6 0.8 Q14.45 0.5 14.45 2 V12.2" fill="none" stroke="#444" stroke-width="1.4" stroke-linecap="round" stroke-linejoin="round" />
<path d="M5.35 6.4 L14.45 4.2" fill="none" stroke="#444" stroke-width="1.4" stroke-linecap="round" stroke-linejoin="round" />
</g>
<g transform="translate(122.00 711.00)">
<path d="M9.6 0.5 A8.3 8.3 0 1 0 17.4 8.8" fill="none" stroke="#1e9cff" stroke-width="1.4" stroke-linecap="round" stroke-linejoin="round" />
<path d="M16.1 16.1 L18.4 18.2" fill="none" stroke="#1e9cff" stroke-width="1.4" stroke-linecap="round" stroke-linejoin="round" />
<path d="M10.6 3.2 H16.9 M10.6 5.9 H14.8" fill="none" stroke="#1e9cff" stroke-width="1.4" stroke-linecap="round" stroke-linejoin="round" />
</g>
<g transform="translate(146.50 711.00)">
<path d="M4.4 5.4 C5.6 5.4 5.8 4.6 6.2 3.4 C6.8 1.6 7.4 0.7 8.6 0.7 H9.8 C11 0.7 11.6 1.6 12.2 3.4 C12.6 4.6 12.8 5.4 14 5.4 C16.5 5.4 17.5 7.2 17.5 9.8 V14 C17.5 16.8 16.3 18 13.5 18 H4.9 C2.1 18 0.9 16.8 0.9 14 V9.8 C0.9 7.2 1.9 5.4 4.4 5.4 Z" fill="none" stroke="#444" stroke-width="1.5" stroke-linecap="round" stroke-linejoin="round" />
<circle cx="9.20" cy="11.90" r="2.9" fill="none" stroke="#444" stroke-width="1.5"/>
<path d="M7.5 5.9 H10.9" fill="none" stroke="#444" stroke-width="1.4" stroke-linecap="round" stroke-linejoin="round" />
</g>
<g transform="translate(172.80 712.00)">
<path d="M8.58 2.41 L0.87 10.58 L1.00 15.10 L5.52 14.97 L13.24 6.81" fill="none" stroke="#ffb910" stroke-width="1.4" stroke-linecap="round" stroke-linejoin="round" />
<circle cx="11.30" cy="4.20" r="3.25" fill="none" stroke="#ffb910" stroke-width="1.4"/>
</g>
<g transform="translate(194.50 710.80)">
<path d="M8.6 0.75 H6.5 Q0.8 0.75 0.8 6.5 V12.5 Q0.8 18.2 6.5 18.2 H12.5 Q18.3 18.2 18.3 12.5 V10.4" fill="none" stroke="#333" stroke-width="1.5" stroke-linecap="round" stroke-linejoin="round" />
<path d="M13.01 2.25 L5.52 9.67 L5.50 13.70 L9.53 13.72 L17.02 6.30" fill="none" stroke="#333" stroke-width="1.5" stroke-linecap="round" stroke-linejoin="round" />
<circle cx="15.40" cy="3.90" r="2.9" fill="none" stroke="#333" stroke-width="1.5"/>
</g>
<g transform="translate(434.00 710.75)">
<path d="M7.40 5.40 L9.63 9.03 L13.77 10.03 L11.01 13.27 L11.34 17.52 L7.40 15.90 L3.46 17.52 L3.79 13.27 L1.03 10.03 L5.17 9.03 Z" fill="none" stroke="#df1fff" stroke-width="1.6" stroke-linecap="round" stroke-linejoin="round" />
<path d="M2 1 V6.3 M7.4 1 V2.3 M12.7 1 V6.3" fill="none" stroke="#df1fff" stroke-width="1.6" stroke-linecap="round" stroke-linejoin="round" />
</g>
<g transform="translate(455.10 710.90)">
<rect x="0.60" y="0.60" width="15.7" height="15.8" rx="5" fill="none" stroke="#ff9c0f" stroke-width="1.2"/>
<path d="M4.4 0.8 V16.2 M12.4 0.8 V16.2 M0.6 8.5 H16.3 M0.8 4.5 H4.4 M12.4 4.5 H16.2 M0.8 12.4 H4.4 M12.4 12.4 H16.2" fill="none" stroke="#ff9c0f" stroke-width="1.2" stroke-linecap="round" stroke-linejoin="round" />
</g></svg>
<div class="a" style="left:417px;top:367px;width:74px;height:52px;border:2px solid #ff0000"></div>
</body>
</html>
